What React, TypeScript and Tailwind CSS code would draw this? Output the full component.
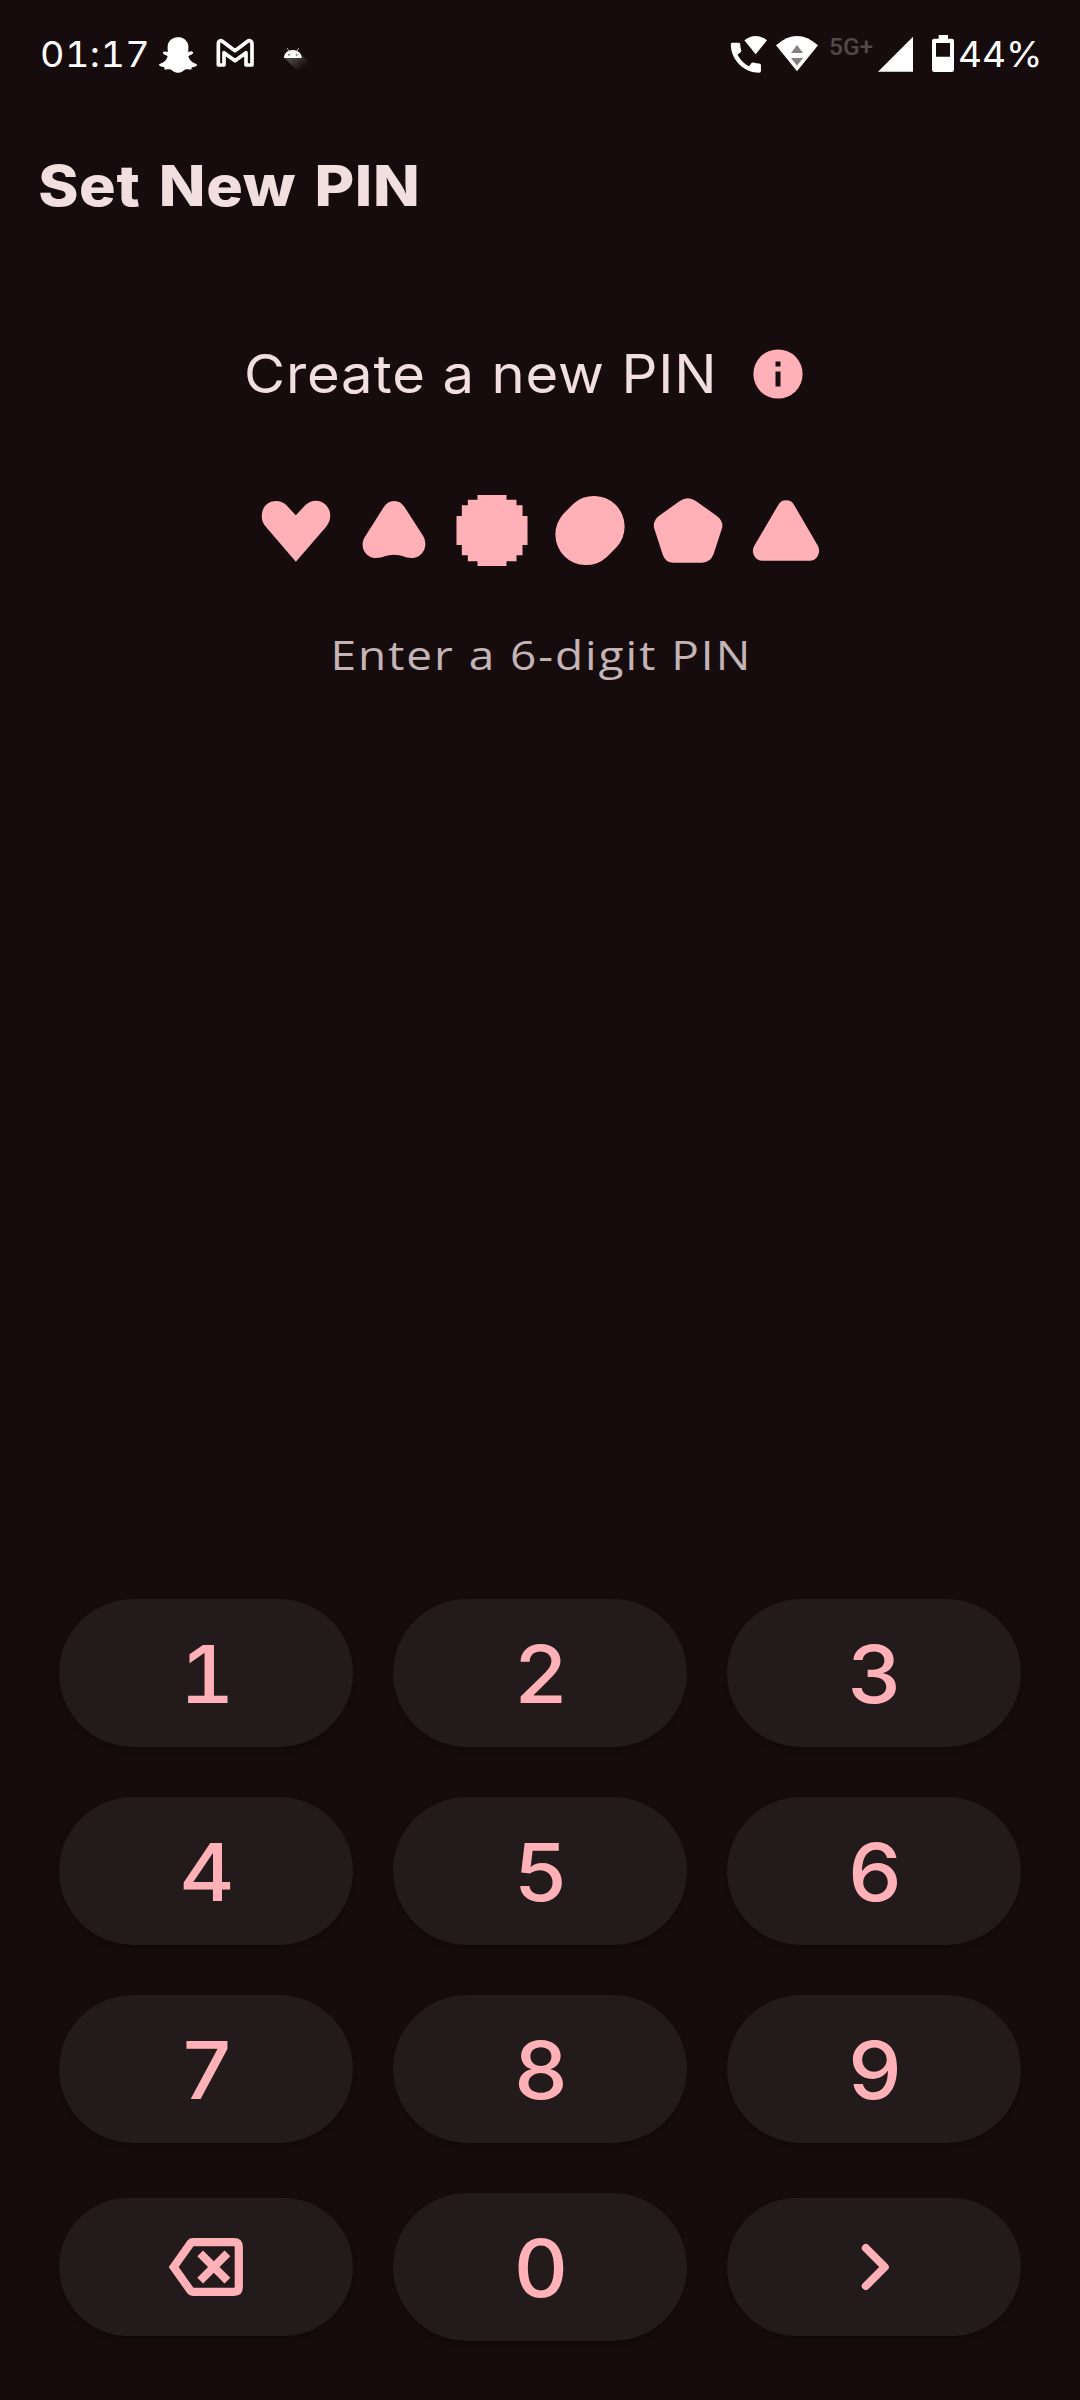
import React from 'react';
import { FaSnapchatGhost } from 'react-icons/fa';

function GmailIcon() {
  return (
    <svg className="h-[70px] w-[40px]" viewBox="584 0 120 210" fill="none" stroke="white" strokeWidth="11" strokeLinejoin="round">
      <path d="M594 135V73C594 61 601 60 608 65L644 92L680 65C687 60 695 61 695 73V135H677V98L644 122L611 98V135Z" />
    </svg>
  );
}

function AndroidHead() {
  return (
    <svg className="h-[70px] w-[30px]" viewBox="784 0 90 210">
      <defs>
        <linearGradient id="cast" gradientUnits="userSpaceOnUse" x1="818" y1="100" x2="853" y2="142">
          <stop offset="0.2" stopColor="#4a4243" />
          <stop offset="1" stopColor="#160c0e" />
        </linearGradient>
      </defs>
      <path d="M794 114L846 104L874 130L840 160Z" fill="url(#cast)" />
      <path d="M793 114C793 99 804 90 819 90C834 90 846 99 846 114Z" fill="white" />
      <path d="M802 84L808 94M837 84L831 94" stroke="#a9a5a6" strokeWidth="3" />
      <circle cx="808" cy="104" r="3" fill="#777" />
      <circle cx="831" cy="104" r="3" fill="#777" />
    </svg>
  );
}

function WifiCallIcon() {
  return (
    <svg className="h-[70px] w-[40px]" viewBox="52 0 120 210" fill="white">
      <path transform="translate(42.4 53) scale(5.02)" d="M20.01 15.38c-1.23 0-2.42-.2-3.53-.56-.35-.12-.74-.03-1.01.24l-1.57 1.97c-2.83-1.35-5.48-3.9-6.89-6.83l1.95-1.66c.27-.28.35-.67.24-1.02-.37-1.11-.56-2.3-.56-3.53 0-.54-.45-.99-.99-.99H4.19C3.65 3 3 3.24 3 3.99 3 13.28 10.73 21 20.01 21c.71 0 .99-.63.99-1.18v-3.45c0-.54-.45-.99-.99-.99z" />
      <path d="M98 61Q132 35 166 61L132 103Z" />
    </svg>
  );
}

function WifiIcon() {
  return (
    <svg className="h-[70px] w-[46px]" viewBox="189 0 138 210">
      <path d="M195 76Q258 20 321 76L258 154Z" fill="white" />
      <path d="M258 75L276 99H240ZM240 114H276L258 137Z" fill="#858182" />
    </svg>
  );
}

function SignalIcon() {
  return (
    <svg className="h-[70px] w-[37px]" viewBox="500 0 111 210" fill="white">
      <path d="M503 155L608 50V155Z" />
    </svg>
  );
}

function BatteryIcon() {
  return (
    <svg className="h-[70px] w-[24px]" viewBox="660 0 72 210">
      <path fillRule="evenodd" fill="white" d="M683 45H711V56H722Q729 56 729 63V149Q729 156 722 156H670Q663 156 663 149V63Q663 56 670 56H683ZM675 69V110H717V69Z" />
    </svg>
  );
}

function StatusBar() {
  return (
    <header className="flex h-[110px] w-full items-start justify-between pt-5 text-white">
      <div className="flex items-start pl-[40px]">
        <span className="block h-[68px] w-[119px] origin-left scale-x-[1.05] text-[36px] leading-[68px] tracking-[0.4px] tabular-nums">01:17</span>
        <FaSnapchatGhost className="mt-[16px] size-[38px]" />
        <span className="ml-[18px]"><GmailIcon /></span>
        <span className="ml-[26px]"><AndroidHead /></span>
      </div>
      <div className="flex items-start pr-[37px]">
        <WifiCallIcon />
        <span className="ml-[5px]"><WifiIcon /></span>
        <span className="ml-[9px] mt-[9px] block h-[36px] w-[48px] font-[Roboto] text-[24.5px] font-medium leading-[36px] text-[#504849]">5G+</span>
        <SignalIcon />
        <span className="ml-[17px]"><BatteryIcon /></span>
        <span className="ml-[3px] block h-[68px] w-[85px] origin-left scale-x-[1.03] text-[36px] leading-[68px]">44%</span>
      </div>
    </header>
  );
}

const shapes = [
  { box: '19.5 72 294 216', d: 'M166 275L76 170C66 159 63 149 64 135C66 106 86 93 107 93C120 93 130 98 138 106L166 136L194 106C203 97 213 92 227 92C250 93 267 110 269 133C270 148 266 158 257 170Z' },
  { box: '313.5 72 294 216', d: 'M430 111C438 99 447 93 461 93C475 93 484 99 492 111L548 198C557 213 556 231 549 243C541 257 529 264 513 264C493 263 484 254 461 254C438 254 427 263 406 264C390 264 378 256 371 243C364 230 365 214 373 201Z' },
  { box: '607.5 72 294 216', d: 'M711 75H798V89H828V106H846V138H861V225H846V256H828V274H798V288H711V274H682V256H664V225H648V138H664V106H682V89H711Z' },
  { box: '1.5 72 294 216', d: 'M98 102A92 92 0 0 1 228 232L199 261A92 92 0 0 1 69 131Z' },
  { box: '295.5 72 294 216', d: 'M418 93Q442 76 466 93L528 137Q549 152 545 173L519 253Q509 278 485 278H399Q375 278 367 255L341 175Q336 153 355 138Z' },
  { box: '589.5 72 294 216', d: 'M712 107Q720 91 737 91Q754 91 762 107L832 227Q840 243 832 257Q824 272 807 272H666Q649 272 641 257Q633 243 641 228Z' },
];

function PinShapes() {
  return (
    <div className="mt-[80px] flex h-[72px] pl-px">
      {shapes.map((s) => (
        <svg key={s.box} className="h-[72px] w-[98px] fill-[#ffb1b7]" viewBox={s.box}>
          <path d={s.d} />
        </svg>
      ))}
    </div>
  );
}

function BackspaceIcon() {
  return (
    <svg className="h-[60px] w-[78px]" viewBox="167 2237 78 60" fill="none" stroke="#ffb1b7" strokeWidth="8.2">
      <path d="M173.7 2267L190.5 2243.3Q191.5 2242.2 193 2242.2H234Q238.8 2242.2 238.8 2247V2287Q238.8 2291.8 234 2291.8H193Q191.5 2291.8 190.5 2290.7Z" />
      <path d="M200.2 2253.4L227.4 2280.6M227.4 2253.4L200.2 2280.6" />
    </svg>
  );
}

function ChevronIcon() {
  return (
    <svg className="h-[60px] w-[40px]" viewBox="854 2237 40 60" fill="none" stroke="#ffb1b7" strokeWidth="8" strokeLinecap="round" strokeLinejoin="round">
      <path d="M865.8 2248L884.8 2267L865.8 2286" />
    </svg>
  );
}

const digits = ['1', '2', '3', '4', '5', '6', '7', '8', '9'];
const keyShadow = 'shadow-[0_3px_5px_rgba(0,0,0,0.3)]';

function DigitKey({ value }: { value: string }) {
  return (
    <button className={`flex h-[148px] items-center justify-center rounded-full bg-[#231a1b] ${keyShadow}`}>
      <span className="block scale-x-[1.06] pl-px pt-[2px] text-[80px] font-medium leading-[100px] tabular-nums">{value}</span>
    </button>
  );
}

function Keypad() {
  return (
    <div className="mt-auto grid w-full grid-cols-3 items-center gap-x-[40px] gap-y-[50px] pb-[59px] pl-[59px] pr-[59px] text-[#ffb1b7]">
      {digits.map((d) => (
        <DigitKey key={d} value={d} />
      ))}
      <button aria-label="Delete" className={`flex h-[138px] items-center justify-center rounded-full bg-[#231a1b] ${keyShadow}`}>
        <BackspaceIcon />
      </button>
      <DigitKey value="0" />
      <button aria-label="Continue" className={`flex h-[138px] items-center justify-center rounded-full bg-[#231a1b] ${keyShadow}`}>
        <ChevronIcon />
      </button>
    </div>
  );
}

export default function App() {
  return (
    <div className="flex h-[2400px] w-[1080px] flex-col items-center overflow-hidden bg-[#160c0e] font-[Inter,sans-serif] text-[#f1dfe0]">
      <StatusBar />
      <h1 className="mt-[36px] h-[80px] w-full origin-left scale-x-[1.09] whitespace-nowrap pl-[35px] text-[56px] font-extrabold leading-[80px] tracking-[0.6px] [word-spacing:4px]">Set New PIN</h1>
      <div className="mt-[107px] flex h-[81px] w-full items-center pl-[244px]">
        <h2 className="w-[509px] origin-left scale-x-[1.06] whitespace-nowrap text-[53px] leading-[80px] tracking-[0.8px]">Create a new PIN</h2>
        <svg className="size-[50px]" viewBox="0 0 50 50">
          <circle cx="25" cy="25" r="24.6" fill="#ffb1b7" />
          <path d="M22.5 12.5H27.5V17.5H22.5ZM22.5 22.5H27.5V37.5H22.5Z" fill="#160c0e" />
        </svg>
      </div>
      <PinShapes />
      <p className="mt-[58px] h-[60px] w-full origin-left scale-x-[1.12] whitespace-nowrap pl-[295px] font-['Open_Sans'] text-[41px] leading-[60px] tracking-[1.75px] text-[#c5b4b6]">Enter a 6-digit PIN</p>
      <Keypad />
    </div>
  );
}
